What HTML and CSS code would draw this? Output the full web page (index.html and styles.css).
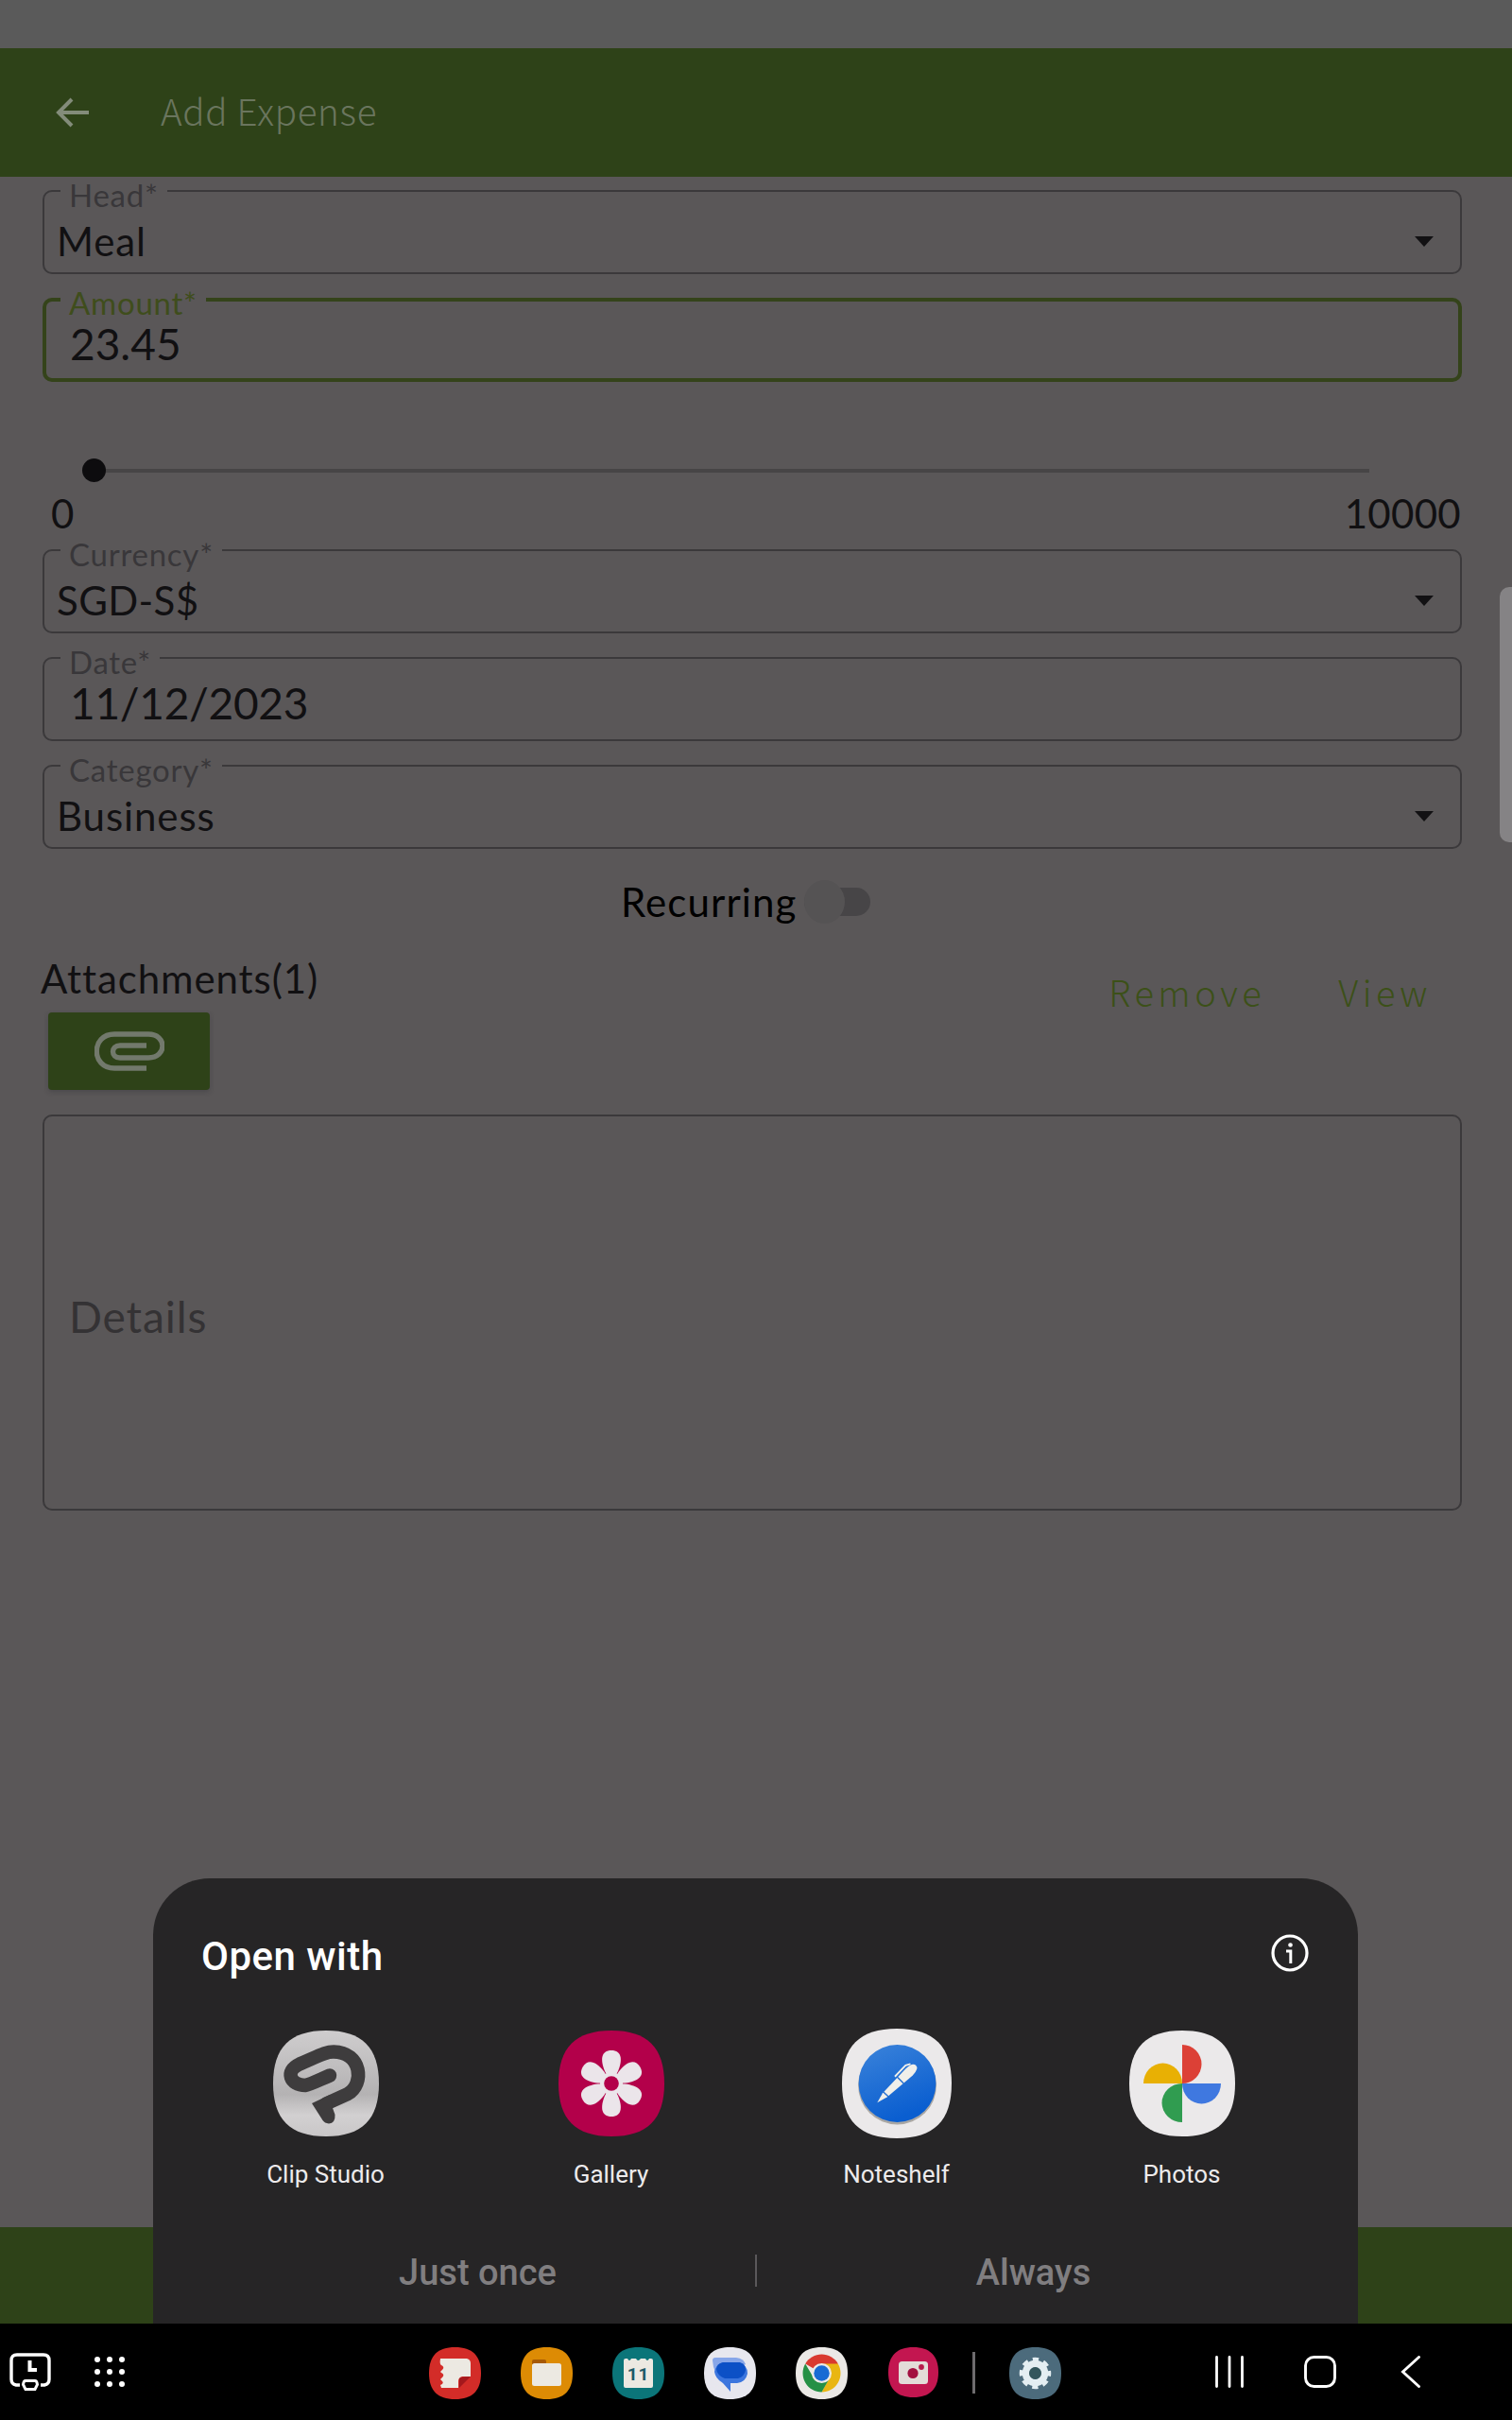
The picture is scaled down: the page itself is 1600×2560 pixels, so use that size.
FILE: index.html
```html
<!DOCTYPE html>
<html lang="en">
<head>
<meta charset="utf-8">
<title>Add Expense</title>
<link rel="stylesheet" href="styles.css">
</head>
<body>
<div class="screen">
  <div class="status"></div>
  <header class="appbar">
    <svg class="back" viewBox="0 0 36 32"><path d="M35 16H4M17 2L3 16l14 14" fill="none" stroke="#838c7a" stroke-width="4"/></svg>
    <h1>Add Expense</h1>
  </header>

  <main class="form">
    <div class="field"><label>Head*</label><span>Meal</span><i class="caret"></i></div>
    <div class="field active typed"><label>Amount*</label><span>23.45</span></div>
    <div class="slider">
      <div class="track"><b class="thumb"></b></div>
      <div class="range"><span>0</span><span>10000</span></div>
    </div>
    <div class="field"><label>Currency*</label><span class="code">SGD-S$</span><i class="caret"></i></div>
    <div class="field typed"><label>Date*</label><span>11/12/2023</span></div>
    <div class="field"><label>Category*</label><span>Business</span><i class="caret"></i></div>
    <div class="recurring"><span>Recurring</span><div class="switch"><b></b></div></div>
    <div class="attach">
      <div class="attach-left">
        <span class="attach-title">Attachments(1)</span>
        <div class="clip"><svg viewBox="0 0 74 42"><path d="M55 39H21C-4 39-4 3 21 3H57C77 3 77 28 57 28H27C17 28 17 15 27 15H55" fill="none" stroke="#72796c" stroke-width="5.4"/></svg></div>
      </div>
      <div class="links"><span>Remove</span><span>View</span></div>
    </div>
    <div class="details">Details</div>
  </main>
  <div class="bottom-strip"></div>
  <div class="edge"></div>

  <section class="sheet">
    <div class="sheet-head">
      <h2>Open with</h2>
      <svg class="info" viewBox="0 0 40 40"><circle cx="20" cy="20" r="18" fill="none" stroke="#fff" stroke-width="3.2"/><circle cx="20.5" cy="11.5" r="2.3" fill="#fff"/><path d="M16 18h4.8v13" fill="none" stroke="#fff" stroke-width="3"/></svg>
    </div>
    <div class="apps">
      <div class="app">
        <svg viewBox="0 0 112 112"><defs><linearGradient id="cs" x1="0" y1="0" x2="0" y2="1"><stop offset="0" stop-color="#cfcdce"/><stop offset=".6" stop-color="#b4b2b3"/><stop offset=".8" stop-color="#d2d0d1"/><stop offset="1" stop-color="#c9c7c8"/></linearGradient></defs><path d="M56 0C94 0 112 18 112 56S94 112 56 112 0 94 0 56 18 0 56 0Z" fill="url(#cs)"/><path d="M56 77.500L79 67C97 57 94 23 64 22.500C56 22.500 50 26 28 35.500C12 43 18 58 34 58C38 57.500 44 54.500 60 47.500" fill="none" stroke="#3e3c3d" stroke-width="14.500" stroke-linecap="round"/><path d="M41 77L60 68 63 82 65.500 89Q66 98 59 98.500 54.500 98 52.500 95Z" fill="#3e3c3d"/></svg>
        <span>Clip Studio</span>
      </div>
      <div class="app">
        <svg viewBox="0 0 112 112"><path d="M56 0C94 0 112 18 112 56S94 112 56 112 0 94 0 56 18 0 56 0Z" fill="#b3004a"/><g fill="#ebe5ea"><path id="petal" d="M56 56L49 43C44 31 45 21 56 21S68 31 63 43Z"/><use href="#petal" transform="rotate(60 56 56)"/><use href="#petal" transform="rotate(120 56 56)"/><use href="#petal" transform="rotate(180 56 56)"/><use href="#petal" transform="rotate(240 56 56)"/><use href="#petal" transform="rotate(300 56 56)"/><circle cx="56" cy="56" r="12"/></g><circle cx="56" cy="56" r="7.800" fill="#b3004a"/></svg>
        <span>Gallery</span>
      </div>
      <div class="app">
        <svg class="wide" viewBox="0 0 112 112"><defs><linearGradient id="ns" x1="0" y1="0" x2=".4" y2="1"><stop offset="0" stop-color="#3b83da"/><stop offset="1" stop-color="#0a5ed0"/></linearGradient></defs><path d="M56 0C94 0 112 18 112 56S94 112 56 112 0 94 0 56 18 0 56 0Z" fill="#ebe9ea"/><circle cx="56.500" cy="58" r="40" fill="#a9a7a4"/><circle cx="56.500" cy="56" r="39.500" fill="url(#ns)"/><path d="M36 75.500L41.500 66 65 41Q72 34 75.500 37.500T72 48L46 70Z" fill="#f0efea"/><path d="M54 49L65 37.500 70 36" fill="none" stroke="#f0efea" stroke-width="1.800"/><path d="M56 49L63 56M41.500 64L47.500 69.500" stroke="#2a72d2" stroke-width="1.500"/></svg>
        <span>Noteshelf</span>
      </div>
      <div class="app">
        <svg viewBox="0 0 112 112"><path d="M56 0C94 0 112 18 112 56S94 112 56 112 0 94 0 56 18 0 56 0Z" fill="#ebe9ea"/><path d="M56 56V15a20.500 20.500 0 0 1 0 41" fill="#dc4036"/><path d="M56 56H15a20.500 21.500 0 0 1 41 0" fill="#e8b004"/><path d="M56 56v41a21.500 20.500 0 0 1 0-41" fill="#309c50"/><path d="M56 56h41a20.500 21.500 0 0 1-41 0" fill="#3f78e0"/></svg>
        <span>Photos</span>
      </div>
    </div>
    <div class="choices"><span>Just once</span><i></i><span>Always</span></div>
  </section>

  <nav class="navbar">
    <div class="nav-left">
      <svg class="nav-recent" viewBox="0 0 44 40"><path d="M11 34H7Q2 33 2 28V8Q2 2 8 2H36Q42 2 42 8V28Q42 33 37 34H33" fill="none" stroke="#fff" stroke-width="3.400"/><path d="M21.500 8V18H29" fill="none" stroke="#fff" stroke-width="4"/><path d="M17 29.500H27Q29 29.500 29.500 33.500L27 38.500H17L14.500 33.500Q15 29.500 17 29.500Z" fill="none" stroke="#fff" stroke-width="3"/></svg>
      <svg class="nav-dots" viewBox="0 0 32 32"><g fill="#fff"><circle cx="3" cy="3" r="3"/><circle cx="16" cy="3" r="3"/><circle cx="29" cy="3" r="3"/><circle cx="3" cy="16" r="3"/><circle cx="16" cy="16" r="3"/><circle cx="29" cy="16" r="3"/><circle cx="3" cy="29" r="3"/><circle cx="16" cy="29" r="3"/><circle cx="29" cy="29" r="3"/></g></svg>
    </div>
    <div class="dock">
      <svg viewBox="0 0 55 55"><path d="M27.500 0C46 0 55 9 55 27.500S46 55 27.500 55 0 46 0 27.500 9 0 27.500 0Z" fill="#d32c28"/><path d="M32 43V33Q33 31 44 31Z" fill="#a4181c"/><path d="M13 12H40Q44 13 44 17V31H35Q31 32 31 36V43H13L12 40Q17 38 13 35 11 34 14 32 17 29 13 27 11 26 14 24 17 21 13 19 11 18 12 12Z" fill="#ece9e2"/></svg>
      <svg viewBox="0 0 55 55"><path d="M27.500 0C46 0 55 9 55 27.500S46 55 27.500 55 0 46 0 27.500 9 0 27.500 0Z" fill="#dd8b04"/><path d="M12 18V15Q12 13 14 13H25Q27 13 27 15V18Z" fill="#a75a06"/><rect x="12" y="17" width="31" height="24" rx="2.500" fill="#ece9e2"/></svg>
      <svg viewBox="0 0 55 55"><path d="M27.500 0C46 0 55 9 55 27.500S46 55 27.500 55 0 46 0 27.500 9 0 27.500 0Z" fill="#0b7579"/><path d="M12 14Q12 12 14 12H16Q18 16 20 12H25Q27 16 30 12H35Q37 16 39 12H41Q43 12 43 14V41Q43 43 41 43H14Q12 43 12 41Z" fill="#ece9e2"/><text x="27.500" y="34.500" text-anchor="middle" class="day">11</text></svg>
      <svg viewBox="0 0 55 55"><path d="M27.500 0C46 0 55 9 55 27.500S46 55 27.500 55 0 46 0 27.500 9 0 27.500 0Z" fill="#e7e7ee"/><path d="M9 14Q9 11 12 11H34Q42 12 44 18L20 34Q10 29 9 14Z" fill="#87a6e8"/><path d="M22 16H36Q46 18 46 28 44 37 35 38H28V47L20 38Q12 33 11 26 13 17 22 16Z" fill="#3c76de"/><path d="M20 16H38Q44 18 44 24 43 31 36 33H22Q14 30 13 23 14 17 20 16Z" fill="#0c50c6"/></svg>
      <svg viewBox="0 0 55 55"><path d="M27.500 0C46 0 55 9 55 27.500S46 55 27.500 55 0 46 0 27.500 9 0 27.500 0Z" fill="#ebe9e6"/><path d="M27.500 27.500L10.200 17.500A20 20 0 0 1 44.800 17.500Z" fill="#d93a30"/><path d="M27.500 17.500H44.800A20 20 0 0 1 27.500 47.500L36 32Z" fill="#e9b612"/><path d="M10.200 17.500A20 20 0 0 0 27.500 47.500L36 32.500 19 32.500Z" fill="#259045"/><circle cx="27.500" cy="27.500" r="10.500" fill="#ebe9e6"/><circle cx="27.500" cy="27.500" r="8.200" fill="#176bd4"/></svg>
      <svg viewBox="0 0 55 55"><path d="M27.500 0C45 0 54 9 54 26.500S45 53 27.500 53 1 44 1 26.500 10 0 27.500 0Z" fill="#c31650"/><rect x="12" y="15" width="31" height="24" rx="3.500" fill="#e3dcd8"/><circle cx="27" cy="27.500" r="5.600" fill="#a31040"/><circle cx="36" cy="21" r="2.900" fill="#b71b4b"/></svg>
      <i class="nav-sep"></i>
      <svg viewBox="0 0 55 55"><path d="M27.500 0C46 0 55 9 55 27.500S46 55 27.500 55 0 46 0 27.500 9 0 27.500 0Z" fill="#4c6b7c"/><circle cx="27.500" cy="27.500" r="10" fill="none" stroke="#e4eef2" stroke-width="7.500"/><circle cx="27.500" cy="27.500" r="14.500" fill="none" stroke="#e4eef2" stroke-width="4.500" stroke-dasharray="6.200 5.190" stroke-dashoffset="3.100"/><circle cx="27.500" cy="27.500" r="6.500" fill="#33565c"/></svg>
    </div>
    <div class="nav-right">
      <svg viewBox="0 0 34 34"><path d="M3.500 1.500v31M17 1.500v31M30.500 1.500v31" stroke="#fff" stroke-width="2.800" stroke-linecap="round"/></svg>
      <svg viewBox="0 0 34 34"><rect x="1.500" y="1.500" width="31" height="31" rx="9" fill="none" stroke="#fff" stroke-width="2.900"/></svg>
      <svg viewBox="0 0 34 34"><path d="M25.500 1.500L8.500 17l17 15.500" fill="none" stroke="#fff" stroke-width="2.900" stroke-linecap="round"/></svg>
    </div>
  </nav>
</div>
</body>
</html>
```
FILE: styles.css
```css
* { box-sizing: border-box; }
body { margin: 0; background: #5a5758; }
h1, h2 { margin: 0; }
svg { display: block; flex: none; }

.screen {
  position: relative;
  width: 1600px;
  height: 2560px;
  overflow: hidden;
  display: flex;
  flex-direction: column;
  background: #5a5758;
  color: #111012;
  font-family: Lato, sans-serif;
  font-variant-ligatures: none;
  letter-spacing: .9px;
}
.status { height: 51px; background: #5a5a5a; }
.appbar {
  height: 136px;
  padding-left: 59px;
  display: flex;
  align-items: center;
  gap: 75px;
  background: #2e4218;
}
.back { width: 36px; height: 32px; }
.appbar h1 {
  margin-top: -6px;
  font: 300 38.5px/60px "Noto Sans CJK SC", sans-serif;
  letter-spacing: .7px;
  color: #6a755e;
}

.form {
  flex: 1;
  padding: 14px 53px 0 45px;
  display: flex;
  flex-direction: column;
}
.field {
  position: relative;
  height: 89px;
  margin-bottom: 25px;
  padding: 27px 28px 0 13px;
  border: 2px solid #3b393b;
  border-radius: 10px;
  display: flex;
  justify-content: space-between;
  font-size: 42px;
  line-height: 50px;
}
.field label {
  position: absolute;
  left: 17px;
  top: -12px;
  padding: 0 9px 0 9px;
  background: #5a5758;
  color: #39373a;
  font-size: 33px;
  line-height: 30px;
  letter-spacing: .75px;
}
.code { letter-spacing: .4px; }
.typed { padding: 22px 0 0 27px; font-size: 46px; letter-spacing: -.3px; }
.active { border: 4px solid #34431a; padding: 20px 0 0 25px; letter-spacing: 0; }
.active label { left: 15px; top: -14px; color: #3f4d1c; }
.caret {
  margin-top: 20px;
  align-self: flex-start;
  border: 10.5px solid transparent;
  border-top: 11px solid #121113;
  border-bottom: 0;
}

.slider { height: 152px; padding-top: 67px; }
.track {
  position: relative;
  height: 4px;
  margin: 0 98px 0 54px;
  background: #474546;
}
.thumb {
  position: absolute;
  left: -12px;
  top: -11px;
  width: 25px;
  height: 25px;
  border-radius: 50%;
  background: #0d0c0e;
}
.range {
  padding: 18px 1px 0 9px;
  display: flex;
  justify-content: space-between;
  font-size: 42px;
  line-height: 50px;
  letter-spacing: .3px;
}

.recurring {
  height: 62px;
  padding-left: 612px;
  display: flex;
  align-items: center;
  gap: 8px;
  font-size: 42px;
  line-height: 50px;
  letter-spacing: 1.1px;
  color: #000;
}
.switch {
  width: 70px;
  height: 30px;
  border-radius: 15px;
  background: #474547;
  display: flex;
  align-items: center;
}
.switch b { width: 43px; height: 46px; flex: none; border-radius: 50%; background: #555354; }

.attach { height: 194px; display: flex; justify-content: space-between; }
.attach-title { display: block; margin: 25px 0 0 -2px; font-size: 42px; line-height: 50px; }
.clip {
  width: 171px;
  height: 82px;
  margin: 11px 0 0 6px;
  border-radius: 4px;
  background: #2e4218;
  box-shadow: 0 2px 5px rgba(40, 40, 46, .3);
  display: flex;
  align-items: center;
  justify-content: center;
}
.clip svg { width: 74px; height: 42px; }
.links {
  padding: 34px 32px 0 0;
  display: flex;
  gap: 77px;
  font: 300 38px/60px "Noto Sans CJK SC", sans-serif;
  letter-spacing: 4.5px;
  color: #3c5018;
}
.details {
  height: 419px;
  padding: 0 26px;
  border: 2px solid #3b393b;
  border-radius: 10px;
  font-size: 46px;
  line-height: 423px;
  color: #343234;
}
.bottom-strip { height: 204px; background: linear-gradient(#2e4218 102px, #000 102px); }
.edge {
  position: absolute;
  right: 0;
  top: 621px;
  width: 13px;
  height: 270px;
  border-radius: 10px 0 0 10px;
  background: #858385;
}

.sheet {
  position: absolute;
  left: 162px;
  top: 1987px;
  width: 1275px;
  height: 471px;
  border-radius: 60px 60px 0 0;
  background: #262526;
  font-family: Roboto, sans-serif;
  letter-spacing: 0;
  color: #fff;
}
.sheet-head {
  height: 161px;
  padding: 58px 52px 0 51px;
  display: flex;
  justify-content: space-between;
}
.sheet-head h2 { font-size: 42px; line-height: 50px; font-weight: 500; letter-spacing: .5px; }
.info { width: 40px; height: 40px; margin-top: 1px; }
.apps { padding: 0 35.5px 0 31.5px; display: grid; grid-template-columns: repeat(4, 302px); }
.app { display: flex; flex-direction: column; align-items: center; }
.app svg { width: 112px; height: 112px; }
.app .wide { width: 116px; height: 116px; margin: -2px 0; }
.app span { margin-top: 24px; font-size: 26px; line-height: 32px; color: #edebec; }
.choices {
  display: flex;
  align-items: center;
  justify-content: center;
  padding-top: 64px;
  font-size: 38px;
  line-height: 48px;
  font-weight: 500;
  color: #807e80;
}
.choices span { width: 586px; text-align: center; }
.choices i { width: 2px; height: 34px; margin-top: -4px; background: #5a585a; }

.navbar {
  position: absolute;
  left: 0;
  top: 2458px;
  width: 1600px;
  height: 102px;
  background: #000;
  display: flex;
  align-items: center;
}
.nav-left { width: 454px; padding-left: 10px; display: flex; align-items: center; gap: 46px; }
.nav-recent { width: 44px; height: 40px; }
.nav-dots { width: 32px; height: 32px; }
.dock { width: 810px; padding-top: 2px; display: flex; align-items: center; gap: 42px; }
.dock svg { width: 55px; height: 55px; }
.dock .nav-sep { width: 3px; height: 44px; margin: 0 -6px 0 -7px; background: #6e6c6e; }
.day { font: 700 19px Roboto, sans-serif; fill: #1c5a68; }
.nav-right { padding-left: 20px; display: flex; gap: 62px; }
.nav-right svg { width: 34px; height: 34px; }
```
